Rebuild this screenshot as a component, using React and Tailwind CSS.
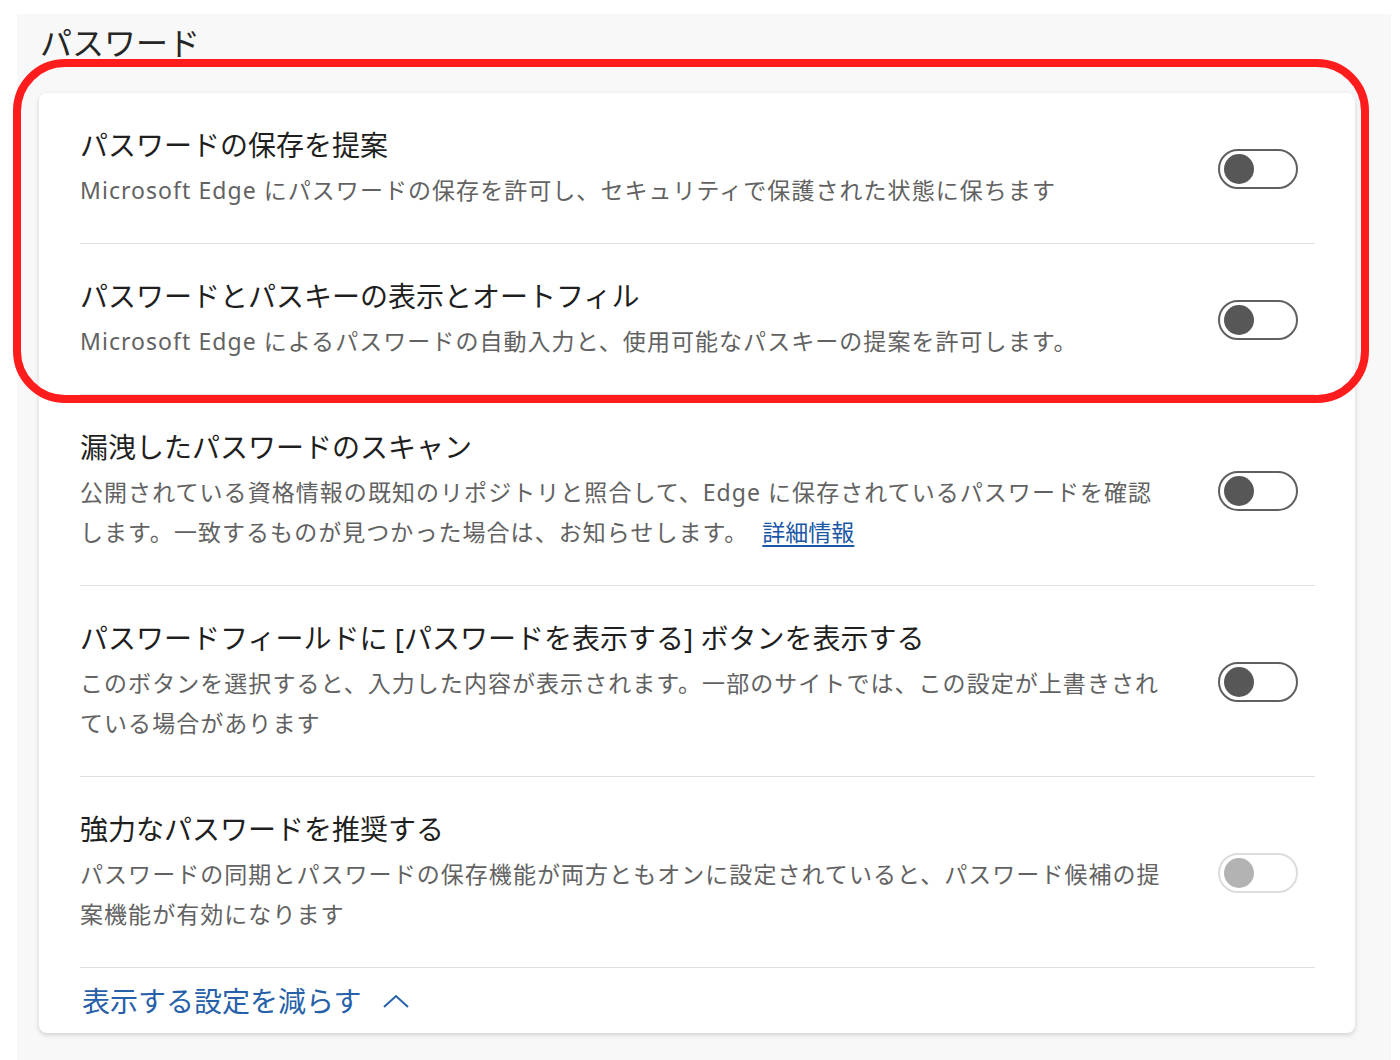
import React from 'react'

// password settings rows - desc is split into lines to keep the wrapping of the original
const rows = [
  {
    title: 'パスワードの保存を提案',
    lines: ['Microsoft Edge にパスワードの保存を許可し、セキュリティで保護された状態に保ちます'],
  },
  {
    title: 'パスワードとパスキーの表示とオートフィル',
    lines: ['Microsoft Edge によるパスワードの自動入力と、使用可能なパスキーの提案を許可します。'],
  },
  {
    title: '漏洩したパスワードのスキャン',
    lines: [
      '公開されている資格情報の既知のリポジトリと照合して、Edge に保存されているパスワードを確認',
      'します。一致するものが見つかった場合は、お知らせします。',
    ],
    link: '詳細情報',
  },
  {
    title: 'パスワードフィールドに [パスワードを表示する] ボタンを表示する',
    lines: [
      'このボタンを選択すると、入力した内容が表示されます。一部のサイトでは、この設定が上書きされ',
      'ている場合があります',
    ],
  },
  {
    title: '強力なパスワードを推奨する',
    lines: [
      'パスワードの同期とパスワードの保存機能が両方ともオンに設定されていると、パスワード候補の提',
      '案機能が有効になります',
    ],
    disabled: true,
  },
]

function Toggle({ disabled }) {
  return (
    <div
      className={
        'w-[80px] h-[40px] rounded-full border-2 flex items-center pl-[4px] flex-shrink-0 ' +
        (disabled ? 'border-[#dcdcdc]' : 'border-[#5f5f5f]')
      }
    >
      <div
        className={
          'w-[30px] h-[30px] rounded-full ' + (disabled ? 'bg-[#b3b3b3]' : 'bg-[#575757]')
        }
      />
    </div>
  )
}

export default function App() {
  return (
    <div
      className="relative bg-white w-[1400px] h-[1060px] pt-[14px] pl-[17px]"
      style={{ fontFamily: '"Noto Sans", "Noto Sans CJK JP", sans-serif' }}
    >
      <div className="w-[1374px] h-[1046px] bg-[#f8f8f8] pt-[9px] pl-[22px] pr-[36px]">
        {/* section heading */}
        <h2 className="text-[32px] leading-[40px] text-[#262626] pl-[1px] mb-[30px]">パスワード</h2>

        {/* settings card */}
        <div className="bg-white rounded-[8px] shadow-[0_2px_5px_rgba(0,0,0,0.16)] px-[41px] pr-[40px]">
          {rows.map((r) => (
            <div
              key={r.title}
              className="flex items-center border-b border-[#e0e0e0] pt-[34px] pb-[33px]"
            >
              <div className="flex-1">
                <p className="text-[28px] leading-[36px] text-[#1f1f1f] mb-[7px]">{r.title}</p>
                {r.lines.map((line, i) => (
                  <p
                    key={i}
                    className="text-[23px] leading-[40px] tracking-[1.05px] text-[#626262] whitespace-nowrap"
                  >
                    {line}
                    {r.link && i === r.lines.length - 1 && (
                      <a
                        href="#"
                        className="ml-[14px] tracking-normal text-[#1a57a6] underline underline-offset-[4px]"
                      >
                        {r.link}
                      </a>
                    )}
                  </p>
                ))}
              </div>
              <div className="mr-[17px] ml-[20px]">
                <Toggle disabled={r.disabled} />
              </div>
            </div>
          ))}

          {/* collapse link */}
          <div className="h-[65px] flex items-center gap-[22px] pl-[2px] text-[#2660a8]">
            <span className="text-[28px] leading-[36px]">表示する設定を減らす</span>
            <svg width="26" height="14" viewBox="0 0 26 14" fill="none">
              <polyline points="1,13 13,2 25,13" stroke="#2660a8" strokeWidth="2" />
            </svg>
          </div>
        </div>
      </div>

      {/* red highlight drawn over the first two settings */}
      <div className="absolute left-[13px] top-[59px] w-[1356px] h-[344px] border-[8px] border-[#ff1c1c] rounded-[52px] pointer-events-none" />
    </div>
  )
}
